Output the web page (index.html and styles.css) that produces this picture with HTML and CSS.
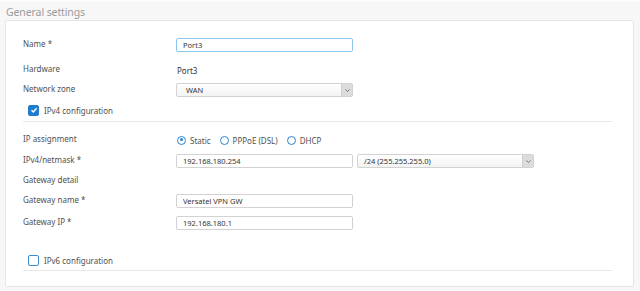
FILE: index.html
```html
<!DOCTYPE html>
<html lang="en">
<head>
    <meta charset="UTF-8">
    <title>General settings</title>
    <link rel="stylesheet" href="styles.css">
</head>
<body>
    <h2 class="section-title">General settings</h2>
    <div class="card">
        <div class="row row-name">
            <label class="label">Name *</label>
            <input class="field field-focus" type="text" value="Port3">
        </div>
        <div class="row row-hardware">
            <span class="label">Hardware</span>
            <span class="value">Port3</span>
        </div>
        <div class="row row-zone">
            <label class="label">Network zone</label>
            <div class="select">
                <span>WAN</span>
                <span class="select-arrow"><svg width="5" height="3" viewBox="0 0 5 3"><path d="M0.5 0.5 L2.5 2.5 L4.5 0.5" fill="none" stroke="#666" stroke-width="0.9"/></svg></span>
            </div>
        </div>
        <div class="row row-check">
            <span class="checkbox checked"><svg width="8" height="8" viewBox="0 0 8 8"><path d="M1.5 4.2 L3.3 6 L6.6 2.2" fill="none" stroke="#fff" stroke-width="1.5"/></svg></span>
            <span class="check-label">IPv4 configuration</span>
        </div>
        <div class="divider"></div>

        <div class="row row-assign">
            <span class="label">IP assignment</span>
            <div class="radios">
                <span class="radio checked"></span><span class="radio-label">Static</span>
                <span class="radio"></span><span class="radio-label">PPPoE (DSL)</span>
                <span class="radio"></span><span class="radio-label">DHCP</span>
            </div>
        </div>
        <div class="row row-ip">
            <label class="label">IPv4/netmask *</label>
            <input class="field" type="text" value="192.168.180.254">
            <div class="select select-mask">
                <span>/24 (255.255.255.0)</span>
                <span class="select-arrow"><svg width="5" height="3" viewBox="0 0 5 3"><path d="M0.5 0.5 L2.5 2.5 L4.5 0.5" fill="none" stroke="#666" stroke-width="0.9"/></svg></span>
            </div>
        </div>
        <div class="row row-gwdetail">
            <span class="label">Gateway detail</span>
        </div>
        <div class="row row-gwname">
            <label class="label">Gateway name *</label>
            <input class="field" type="text" value="Versatel VPN GW">
        </div>
        <div class="row row-gwip">
            <label class="label">Gateway IP *</label>
            <input class="field" type="text" value="192.168.180.1">
        </div>
        <div class="row row-check row-ipv6">
            <span class="checkbox"></span>
            <span class="check-label">IPv6 configuration</span>
        </div>
        <div class="divider divider-last"></div>
    </div>
</body>
</html>
```

FILE: styles.css
```css
body {
    margin: 0;
    padding: 0 6px 0 5px;
    background: #f7f7f7;
    font-family: 'Noto Sans', sans-serif;
    font-size: 8px;
    color: #505050;
    height: 291px;
    box-sizing: border-box;
    border-top: 2px solid #fdfdfd;
}

.section-title {
    margin: 0;
    padding: 3px 0 0 1px;
    height: 18px;
    box-sizing: border-box;
    font-size: 10.5px;
    font-weight: 400;
    color: #9b9b9b;
    line-height: 14px;
    letter-spacing: -0.1px;
}

.card {
    background: #fff;
    border: 1px solid #e6e6e6;
    border-radius: 2px;
    padding: 17px 21px 16px 17px;
    height: 267px;
    box-sizing: border-box;
}

.row {
    display: flex;
    align-items: center;
    height: 14px;
}

.label {
    width: 153px;
    flex: none;
    margin-top: -3px;
}

.value {
    padding-left: 1px;
    color: #333;
}

.field {
    width: 177px;
    height: 14px;
    box-sizing: border-box;
    border: 1px solid #d2d2d2;
    border-radius: 2px;
    padding: 0 0 0 6px;
    font-family: inherit;
    font-size: 7.5px;
    color: #333;
    background: #fff;
    outline: none;
}

.field-focus {
    border-color: #8ec5ee;
}

.select {
    width: 177px;
    height: 14px;
    box-sizing: border-box;
    border: 1px solid #d2d2d2;
    border-radius: 2px;
    display: flex;
    align-items: center;
    justify-content: space-between;
    padding-left: 9px;
    font-size: 7.5px;
    color: #333;
    background: linear-gradient(#fff, #f3f3f3);
}

.select-mask {
    margin-left: 4px;
    padding-left: 6px;
}

.select-arrow {
    width: 10px;
    height: 12px;
    background: #dcdcdc;
    border-left: 1px solid #cfcfcf;
    display: flex;
    align-items: center;
    justify-content: center;
}

.row-name { margin-bottom: 11px; }
.row-hardware { margin-bottom: 6px; }
.row-zone { margin-bottom: 6px; }

.row-check {
    padding-left: 5px;
}

.checkbox {
    width: 11px;
    height: 11px;
    box-sizing: border-box;
    border: 1.5px solid #3b8cd3;
    border-radius: 2px;
    display: flex;
    align-items: center;
    justify-content: center;
    margin-right: 5px;
}

.checkbox.checked {
    background: #1f7dd0;
    border-color: #1f7dd0;
}

.check-label {
    color: #505050;
}

.divider {
    height: 1px;
    background: #e8e8e8;
    width: 589px;
    margin: 4px 0 11px;
}

.row-assign { margin-bottom: 7px; }

.radios {
    display: flex;
    align-items: center;
    padding-left: 1px;
}

.radio {
    width: 9px;
    height: 9px;
    box-sizing: border-box;
    border: 1.5px solid #2a84d2;
    border-radius: 50%;
    position: relative;
    margin-right: 4px;
}

.radio.checked::after {
    content: "";
    position: absolute;
    left: 1.5px;
    top: 1.5px;
    width: 3px;
    height: 3px;
    border-radius: 50%;
    background: #2a84d2;
}

.radio-label {
    margin-right: 9px;
}

.row-ip { margin-bottom: 6px; }
.row-gwdetail { margin-bottom: 6px; }
.row-gwname { margin-bottom: 8px; }
.row-gwip { margin-bottom: 23px; }

.divider-last {
    margin: 3px 0 0;
}
```
